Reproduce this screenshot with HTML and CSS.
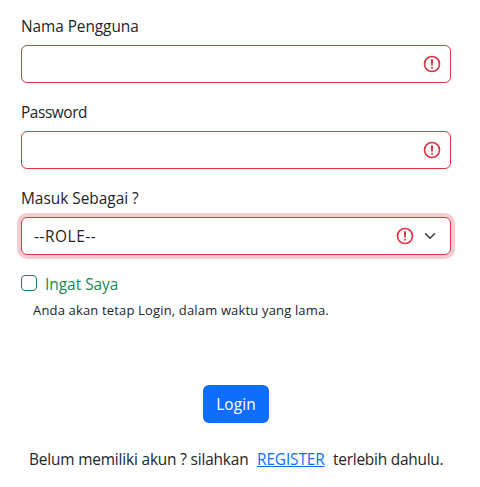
FILE: index.html
```html
<!DOCTYPE html>
<html lang="id">
<head>
<meta charset="utf-8">
<title>Login</title>
<link rel="stylesheet" href="styles.css">
</head>
<body>
<form class="login">
  <div class="field">
    <label class="label"><span class="t-user">Nama Pengguna</span></label>
    <div class="control">
      <svg class="alert" viewBox="0 0 12 12" fill="none" stroke="#dc3545"><circle cx="6" cy="6" r="4.5"/><path stroke-linejoin="round" d="M5.8 3.6h.4L6 6.5z"/><circle cx="6" cy="8.2" r=".6" fill="#dc3545" stroke="none"/></svg>
    </div>
  </div>
  <div class="field">
    <label class="label"><span class="t-pass">Password</span></label>
    <div class="control">
      <svg class="alert" viewBox="0 0 12 12" fill="none" stroke="#dc3545"><circle cx="6" cy="6" r="4.5"/><path stroke-linejoin="round" d="M5.8 3.6h.4L6 6.5z"/><circle cx="6" cy="8.2" r=".6" fill="#dc3545" stroke="none"/></svg>
    </div>
  </div>
  <div class="field">
    <label class="label"><span class="t-as">Masuk Sebagai ?</span></label>
    <div class="control focused">
      <span class="value">--ROLE--</span>
      <svg class="alert" viewBox="0 0 12 12" fill="none" stroke="#dc3545"><circle cx="6" cy="6" r="4.5"/><path stroke-linejoin="round" d="M5.8 3.6h.4L6 6.5z"/><circle cx="6" cy="8.2" r=".6" fill="#dc3545" stroke="none"/></svg>
      <svg class="chevron" viewBox="0 0 16 16" fill="none" stroke="#343a40" stroke-width="2" stroke-linecap="round" stroke-linejoin="round"><path d="m2 5 6 6 6-6"/></svg>
    </div>
  </div>
  <div class="check"><span class="box"></span><span class="t-check">Ingat Saya</span></div>
  <p class="hint">Anda akan tetap Login, dalam waktu yang lama.</p>
  <button class="button" type="button">Login</button>
  <p class="signup"><span class="t-before">Belum memiliki akun ? silahkan</span><a class="link" href="#">REGISTER</a><span class="t-after">terlebih dahulu.</span></p>
</form>
</body>
</html>
```
FILE: styles.css
```css
* { box-sizing: border-box; }
body { margin: 0; background: #fff; color: #212529; font: 15.4px/24px "Open Sans", "Noto Sans", sans-serif; }
.login { padding: 13px 29px 0 21px; }
.field { margin-bottom: 16px; }
.label { display: block; height: 24px; margin-bottom: 8px; padding-top: 2px; white-space: nowrap; }
.t-user { letter-spacing: -.06px; }
.t-pass { letter-spacing: -.42px; }
.control { display: flex; align-items: center; justify-content: flex-end; height: 38px; padding: 0 8px 0 12px; border: 1px solid #dc3545; border-radius: 6px; }
.focused { padding-right: 12px; box-shadow: 0 0 0 4px rgba(220, 53, 69, .25); }
.value { margin-right: auto; padding-top: 2px; letter-spacing: .55px; }
.alert { width: 20px; height: 20px; }
.chevron { width: 16px; height: 12px; margin-left: 7px; }
.check { display: flex; align-items: center; gap: 8px; height: 24px; color: #198754; white-space: nowrap; }
.t-check { padding-top: 3px; }
.box { width: 16px; height: 16px; border: 1px solid #198754; border-radius: 4px; }
.hint { margin: 3px 0 0 12px; font-size: 13px; line-height: 24px; letter-spacing: .16px; white-space: nowrap; }
.button { display: block; width: 66px; height: 38px; margin: 63px 0 0 182px; padding: 2px 0 0; border: 0; border-radius: 6px; background: #0d6efd; color: #fff; font: inherit; letter-spacing: .15px; }
.signup { display: flex; gap: 8px; margin: 25px 0 0 8px; white-space: nowrap; }
.t-before { width: 220px; letter-spacing: -.16px; }
.link { width: 68px; color: #0d6efd; letter-spacing: -.12px; }
.t-after { letter-spacing: -.22px; }
```
